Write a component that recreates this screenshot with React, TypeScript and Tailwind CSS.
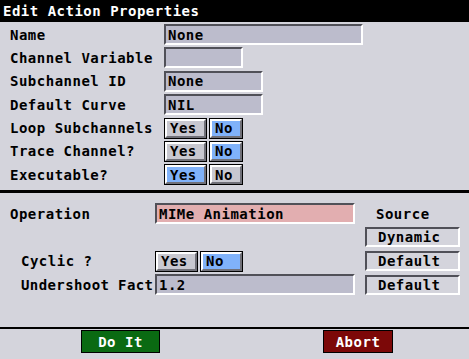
import React from 'react'

// ─── Shared bits ───────────────────────────────────────────────────────────────

const FONT = "font-['DejaVu_Sans_Mono',monospace] font-bold text-[14px] tracking-[0.5px] leading-none"

const sunken = 'border-2 border-t-[#505058] border-l-[#505058] border-b-white border-r-white'

function Field({ value, w, tone = 'gray' }: { value: string; w: string; tone?: 'gray' | 'pink' }) {
  const bg = tone === 'pink' ? 'bg-[#e2aeb0]' : 'bg-[#bcbccc]'
  return (
    <div className={`${w} h-[21px] ${bg} ${sunken} flex items-center pl-[2px] text-black`}>
      {value}
    </div>
  )
}

function Toggle({ label, on, w }: { label: string; on: boolean; w: string }) {
  return (
    <div className={`${w} h-[21px] border border-black`}>
      <div
        className={`h-full flex items-center pl-[3px] border-2 border-t-white border-l-white border-b-[#707078] border-r-[#707078] ${
          on ? 'bg-[#80b2fa]' : 'bg-[#c8c8d0]'
        }`}
      >
        {label}
      </div>
    </div>
  )
}

function SourceBox({ label }: { label: string }) {
  return (
    <div className={`w-[95px] h-[20px] ${sunken} bg-[#d4d4dc] flex items-center pl-[11px]`}>{label}</div>
  )
}

const TOP_ROWS = [
  { label: 'Name', kind: 'field', value: 'None', w: 'w-[199px]' },
  { label: 'Channel Variable', kind: 'field', value: '', w: 'w-[79px]' },
  { label: 'Subchannel ID', kind: 'field', value: 'None', w: 'w-[99px]' },
  { label: 'Default Curve', kind: 'field', value: 'NIL', w: 'w-[99px]' },
  { label: 'Loop Subchannels', kind: 'toggle', yes: false },
  { label: 'Trace Channel?', kind: 'toggle', yes: false },
  { label: 'Executable?', kind: 'toggle', yes: true },
] as const

export default function App() {
  return (
    <div className={`w-[469px] h-[359px] bg-[#d4d4dc] text-black overflow-hidden flex flex-col ${FONT}`}>
      {/* Title bar */}
      <div className="h-[22px] bg-black text-white flex items-center pl-[3px]">
        Edit Action Properties
      </div>

      {/* Action fields */}
      <div className="flex flex-col gap-[2.4px] pt-[2px] pl-[10px]">
        {TOP_ROWS.map(row => (
          <div key={row.label} className="flex items-center h-[21px]">
            <div className="w-[154px]">{row.label}</div>
            {row.kind === 'field' ? (
              <Field value={row.value} w={row.w} />
            ) : (
              <div className="flex gap-[2px]">
                <Toggle label="Yes" on={row.yes} w="w-[43px]" />
                <Toggle label="No" on={!row.yes} w="w-[34px]" />
              </div>
            )}
          </div>
        ))}
      </div>

      <div className="mt-[5px] h-[3px] bg-black" />

      {/* Operation section */}
      <div className="grid grid-cols-[155px_200px_1fr] grid-rows-[21px_21px_21px_21px] gap-y-[2.6px] pt-[10px]">
        <div className="pl-[10px] flex items-center">Operation</div>
        <Field value="MIMe Animation" w="w-[200px]" tone="pink" />
        <div className="pl-[21px] flex items-center">Source</div>

        <div />
        <div />
        <div className="pl-[10px] flex items-center">
          <SourceBox label="Dynamic" />
        </div>

        <div className="pl-[21px] flex items-center">Cyclic ?</div>
        <div className="flex gap-[2px]">
          <Toggle label="Yes" on={false} w="w-[43px]" />
          <Toggle label="No" on={true} w="w-[43px]" />
        </div>
        <div className="pl-[10px] flex items-center">
          <SourceBox label="Default" />
        </div>

        <div className="pl-[21px] flex items-center whitespace-nowrap tracking-[0.4px]">Undershoot Fact</div>
        <Field value="1.2" w="w-[200px]" />
        <div className="pl-[10px] flex items-center">
          <SourceBox label="Default" />
        </div>
      </div>

      <div className="mt-auto h-[2px] bg-black" />

      {/* Actions */}
      <div className="h-[30px] flex items-start pt-[1px] text-white">
        <button className={`ml-[81px] w-[79px] h-[23px] bg-[#0a6a12] border border-black flex items-center justify-center ${FONT} text-white`}>
          Do It
        </button>
        <button className={`ml-[163px] w-[70px] h-[23px] bg-[#7c0808] border border-black flex items-center justify-center ${FONT} text-white`}>
          Abort
        </button>
      </div>
    </div>
  )
}
